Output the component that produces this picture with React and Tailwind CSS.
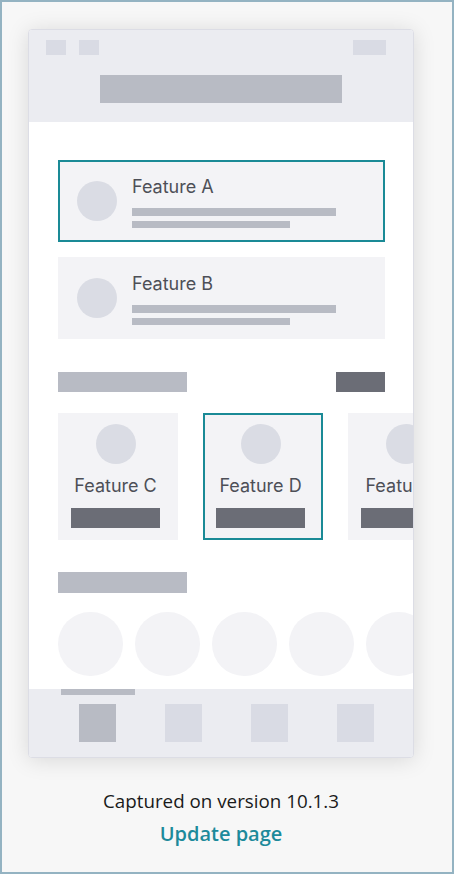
import React from 'react';

const Line = ({ className }) => <div className={`bg-[#b8bbc4] ${className}`} />;

const ListCard = ({ title, active }) => (
  <div
    className={`flex h-[82px] items-center bg-[#f3f3f6] ${
      active ? 'border-2 border-[#1a8a96] pl-[17px]' : 'pl-[19px]'
    }`}
  >
    <div className="h-[40px] w-[40px] shrink-0 rounded-full bg-[#dadce4]" />
    <div className="ml-[15px] flex flex-col">
      <span className="text-[18px] leading-[26px] text-[#4d4f57]">{title}</span>
      <Line className="mt-[8px] h-[8px] w-[204px]" />
      <Line className="mt-[5px] h-[7px] w-[158px]" />
    </div>
  </div>
);

const TileCard = ({ title, active }) => (
  <div
    className={`flex h-[127px] w-[120px] shrink-0 flex-col items-center bg-[#f3f3f6] pr-[5px] ${
      active ? 'border-2 border-[#1a8a96] pt-[9px]' : 'pt-[11px]'
    }`}
  >
    <div className="h-[40px] w-[40px] rounded-full bg-[#dadce4]" />
    <span className="mt-[10px] whitespace-nowrap text-[18px] leading-[24px] text-[#4d4f57]">{title}</span>
    <div className="mt-[10px] h-[20px] w-[89px] bg-[#6b6d76]" />
  </div>
);

export default function App() {
  return (
    <div className="h-[874px] w-[454px] overflow-hidden border-2 border-[#94b3c2] bg-[#f7f7f7]">
      <div className="ml-[26px] pt-[27px]">
        {/* Phone frame */}
        <div className="flex h-[729px] w-[386px] flex-col overflow-hidden rounded-[4px] border border-[#dcdde5] bg-white shadow-[0_2px_22px_rgba(0,0,0,0.13)] font-['Inter',sans-serif]">
          {/* Header */}
          <div className="h-[92px] shrink-0 bg-[#ebecf1] px-[17px] pt-[10px]">
            <div className="flex items-start">
              <div className="h-[15px] w-[20px] bg-[#d9dbe4]" />
              <div className="ml-[13px] h-[15px] w-[20px] bg-[#d9dbe4]" />
              <div className="ml-auto mr-[10px] h-[15px] w-[33px] bg-[#d9dbe4]" />
            </div>
            <div className="mx-auto mt-[20px] h-[28px] w-[242px] bg-[#b8bbc4]" />
          </div>

          {/* Content */}
          <div className="h-[567px] shrink-0 overflow-hidden pl-[29px] pt-[38px]">
            <div className="mr-[28px] flex flex-col gap-[15px]">
              <ListCard title="Feature A" active />
              <ListCard title="Feature B" />
            </div>

            <div className="mr-[28px] mt-[33px] flex items-center justify-between">
              <div className="h-[20px] w-[129px] bg-[#b8bbc4]" />
              <div className="h-[20px] w-[49px] bg-[#6b6d76]" />
            </div>

            <div className="mt-[21px] flex gap-[25px]">
              <TileCard title="Feature C" />
              <TileCard title="Feature D" active />
              <TileCard title="Feature E" />
            </div>

            <div className="mt-[32px] h-[21px] w-[129px] bg-[#b8bbc4]" />

            <div className="mt-[19px] flex gap-[12px]">
              {[0, 1, 2, 3, 4].map((i) => (
                <div key={i} className="h-[64px] w-[65px] shrink-0 rounded-full bg-[#f3f3f6]" />
              ))}
            </div>
          </div>

          {/* Bottom nav */}
          <div className="flex-1 bg-[#ebecf1]">
            <div className="ml-[32px] h-[6px] w-[74px] bg-[#b8bbc4]" />
            <div className="mt-[9px] flex gap-[49px] pl-[50px]">
              <div className="h-[38px] w-[37px] bg-[#b8bbc4]" />
              <div className="h-[38px] w-[37px] bg-[#d9dbe4]" />
              <div className="h-[38px] w-[37px] bg-[#d9dbe4]" />
              <div className="h-[38px] w-[37px] bg-[#d9dbe4]" />
            </div>
          </div>
        </div>

        {/* Footer */}
        <div className="w-[386px] pt-[32px] text-center font-['Open_Sans',sans-serif]">
          <p className="text-[18.8px] leading-[22px] text-[#1a1a1a]">Captured on version 10.1.3</p>
          <p className="mt-[9px] text-[20px] font-semibold leading-[26px] text-[#1d8a9b]">Update page</p>
        </div>
      </div>
    </div>
  );
}
